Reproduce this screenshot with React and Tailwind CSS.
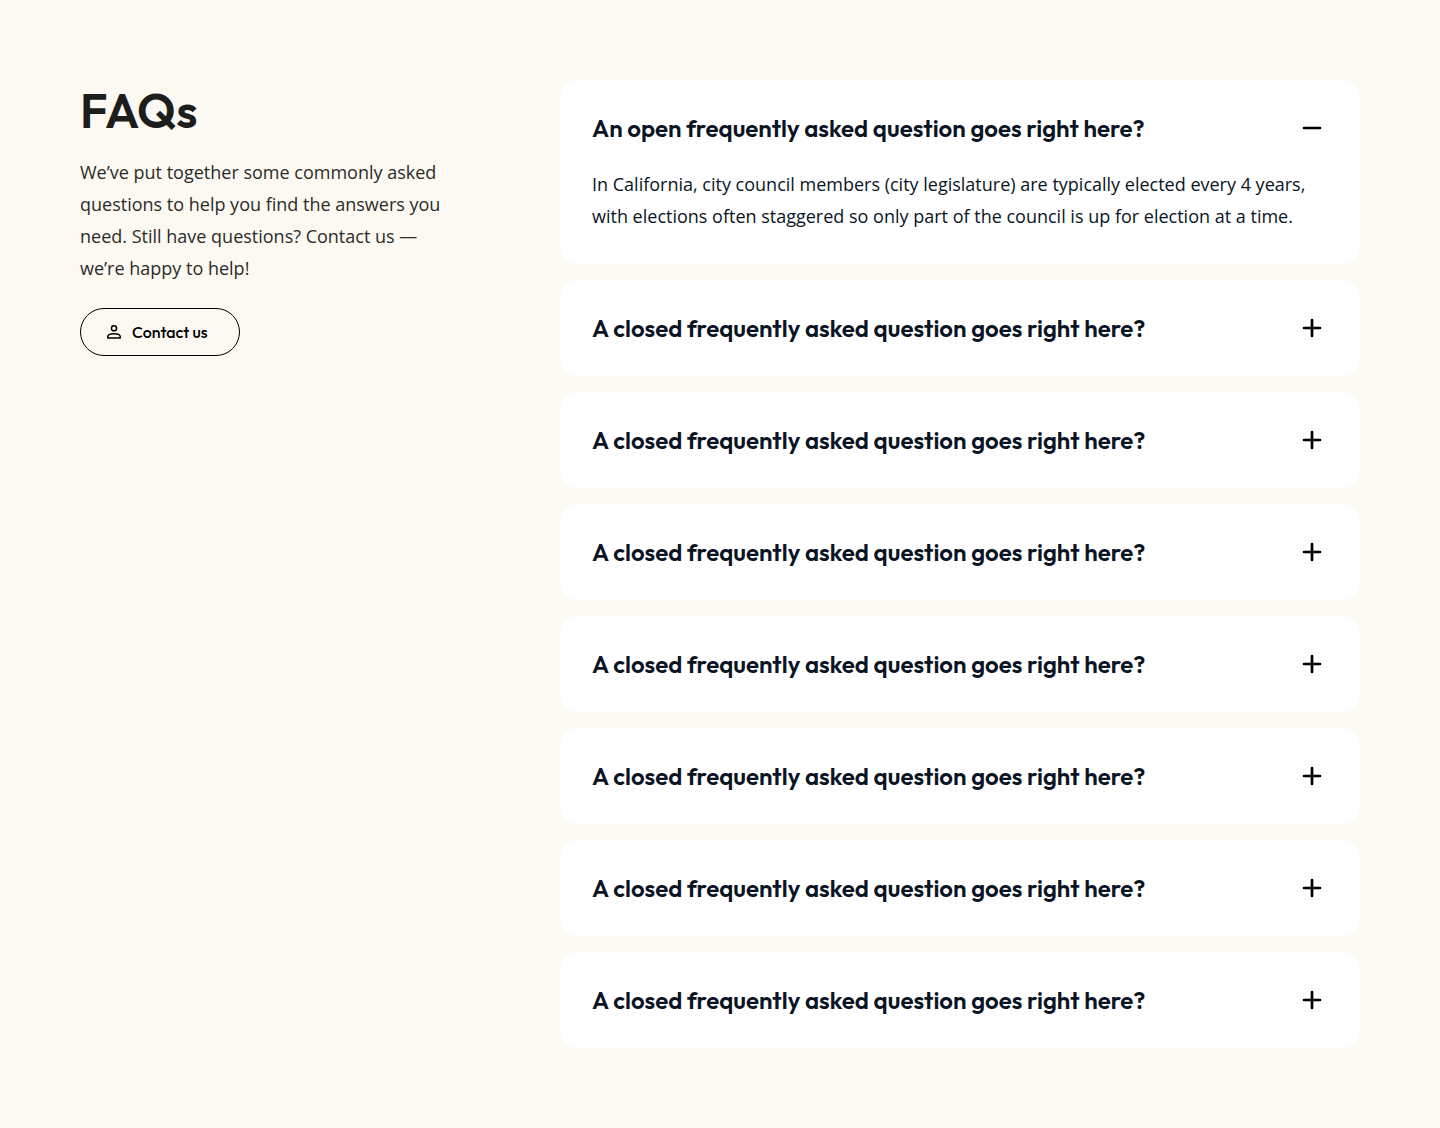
import { useState } from "react";

const closedQuestion = "A closed frequently asked question goes right here?";

const faqs = [
  {
    question: "An open frequently asked question goes right here?",
    lines: [
      "In California, city council members (city legislature) are typically elected every 4 years,",
      "with elections often staggered so only part of the council is up for election at a time.",
    ],
  },
  ...Array.from({ length: 7 }, () => ({ question: closedQuestion, lines: [] })),
];

function ToggleIcon({ open }) {
  return (
    <svg viewBox="0 0 32 32" className="size-8 shrink-0" fill="none" stroke="#000" strokeWidth="2.67" strokeLinecap="round">
      <path d="M8 16h16" />
      {!open && <path d="M16 8v16" />}
    </svg>
  );
}

function UserIcon() {
  return (
    <svg viewBox="0 0 16 16" className="size-4 shrink-0" fill="none" stroke="#000" strokeWidth="1.5">
      <circle cx="8" cy="4.25" r="2.6" />
      <path d="M1.75 14.1v-1.3c0-2.1 3.2-3.1 6.25-3.1s6.25 1 6.25 3.1v1.3z" strokeLinejoin="round" />
    </svg>
  );
}

function FaqItem({ item, open, onToggle }) {
  return (
    <div className="rounded-2xl bg-white p-8">
      <button onClick={onToggle} className="flex h-8 w-full items-center justify-between text-left">
        <span className="whitespace-nowrap font-[Outfit,Lato,sans-serif] text-2xl leading-8 font-semibold text-[#0a1424]">
          {item.question}
        </span>
        <ToggleIcon open={open} />
      </button>
      {open && item.lines.length > 0 && (
        <p className="mt-6 whitespace-nowrap text-lg leading-8 text-[#0a1424]">
          {item.lines.map((line) => (
            <span key={line} className="block">{line}</span>
          ))}
        </p>
      )}
    </div>
  );
}

export default function App() {
  const [openIndex, setOpenIndex] = useState(0);
  return (
    <main className="flex min-h-screen items-start justify-between bg-[#fcf9f2] p-20 font-['Open_Sans',sans-serif]">
      <section className="w-96">
        <h1 className="font-[Outfit,Lato,sans-serif] text-5xl leading-15 font-semibold text-[#1d1d1b]">FAQs</h1>
        <p className="mt-4 whitespace-nowrap text-lg leading-8 text-[#2b2b29]">
          We’ve put together some commonly asked<br />
          questions to help you find the answers you<br />
          need. Still have questions? Contact us —<br />
          we’re happy to help!
        </p>
        <button className="mt-6 flex h-12 w-40 items-center gap-2.5 rounded-full border border-black pl-[25px] font-[Outfit,Lato,sans-serif] text-base font-medium text-black">
          <UserIcon />
          Contact us
        </button>
      </section>
      <section className="flex w-200 flex-col gap-4">
        {faqs.map((item, i) => (
          <FaqItem key={i} item={item} open={openIndex === i} onToggle={() => setOpenIndex(openIndex === i ? -1 : i)} />
        ))}
      </section>
    </main>
  );
}
